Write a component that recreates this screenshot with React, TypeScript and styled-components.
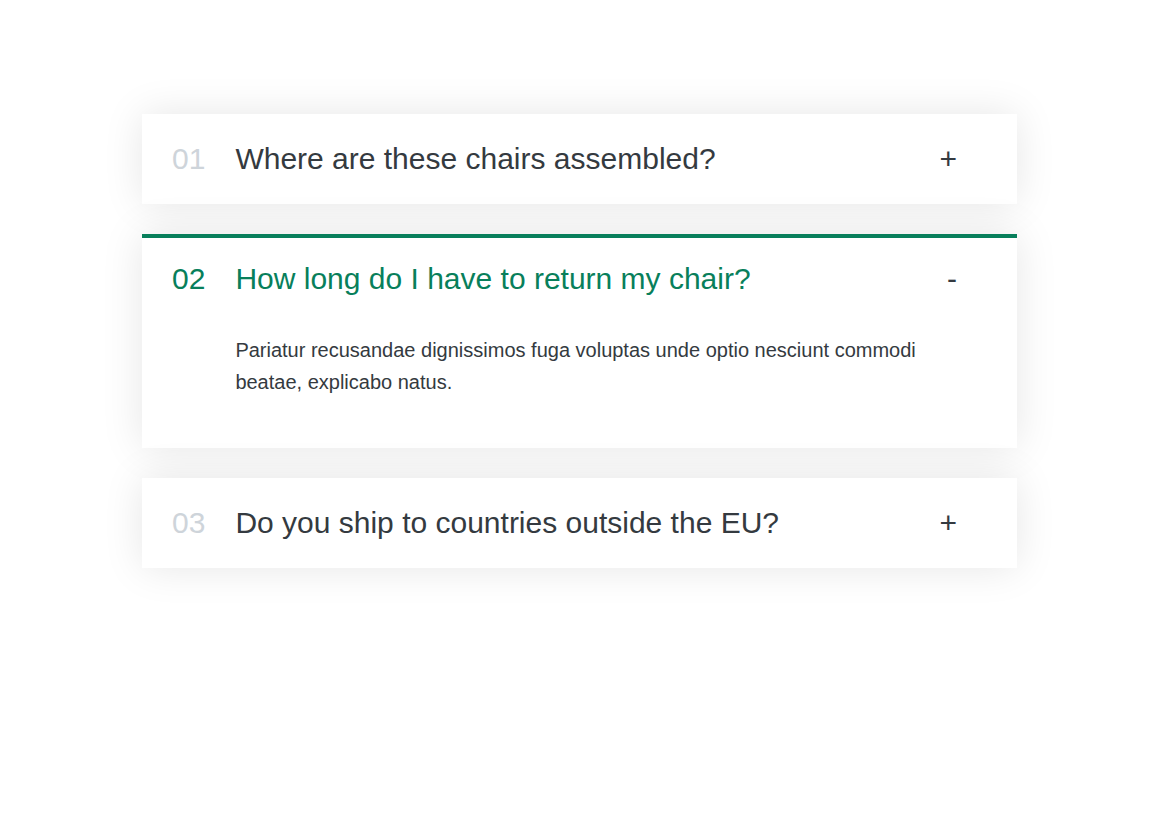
import React, { useState } from "react";
import styled, { createGlobalStyle, css } from "styled-components";

const Global = createGlobalStyle`
  * { box-sizing: border-box; margin: 0; padding: 0; }
  html, body { min-height: 100%; }
  body { margin: 0; font-family: "Liberation Sans", Arial, sans-serif; color: #343a40; background: #fff; }
`;

const Accordion = styled.div`
  width: 875px;
  margin: 114px 0 125px 142px;
  display: flex;
  flex-direction: column;
  gap: 30px;
`;

const Item = styled.div<{ $open: boolean }>`
  box-shadow: 0 0 40px rgba(0, 0, 0, 0.1);
  background: #fff;
  padding: 24px 60px 24px 30px;
  border-top: 4px solid #fff;
  border-bottom: 4px solid #fff;
  display: grid;
  grid-template-columns: auto 1fr auto;
  column-gap: 30px;
  row-gap: 38px;
  align-items: center;
  cursor: pointer;
  ${(p) =>
    p.$open &&
    css`
      border-top-color: #087f5b;
    `}
`;

const Number = styled.p<{ $open: boolean }>`
  font-size: 30px;
  line-height: 34px;
  color: ${(p) => (p.$open ? "#087f5b" : "#ced4da")};
`;

const Title = styled.p<{ $open: boolean }>`
  font-size: 30px;
  line-height: 34px;
  color: ${(p) => (p.$open ? "#087f5b" : "#343a40")};
`;

const Icon = styled.p`
  font-size: 30px;
  line-height: 34px;
  color: #343a40;
`;

const Hidden = styled.div`
  grid-column: 2 / -1;
  padding-bottom: 22px;
`;

const Body = styled.p`
  font-size: 20px;
  line-height: 32px;
  color: #343a40;
`;

const faqs = [
  {
    title: "Where are these chairs assembled?",
    text: "Lorem ipsum dolor sit amet consectetur, adipisicing elit.",
  },
  {
    title: "How long do I have to return my chair?",
    text: "Pariatur recusandae dignissimos fuga voluptas unde optio nesciunt commodi beatae, explicabo natus.",
  },
  {
    title: "Do you ship to countries outside the EU?",
    text: "Excepturi velit laborum, perspiciatis nemo perferendis reiciendis aliquam possimus dolor sed!",
  },
];

export default function App() {
  const [open, setOpen] = useState<number | null>(1);
  return (
    <>
      <Global />
      <Accordion>
        {faqs.map((f, i) => {
          const isOpen = open === i;
          return (
            <Item key={i} $open={isOpen} onClick={() => setOpen(isOpen ? null : i)}>
              <Number $open={isOpen}>{String(i + 1).padStart(2, "0")}</Number>
              <Title $open={isOpen}>{f.title}</Title>
              <Icon>{isOpen ? "-" : "+"}</Icon>
              {isOpen && (
                <Hidden>
                  <Body>{f.text}</Body>
                </Hidden>
              )}
            </Item>
          );
        })}
      </Accordion>
    </>
  );
}
